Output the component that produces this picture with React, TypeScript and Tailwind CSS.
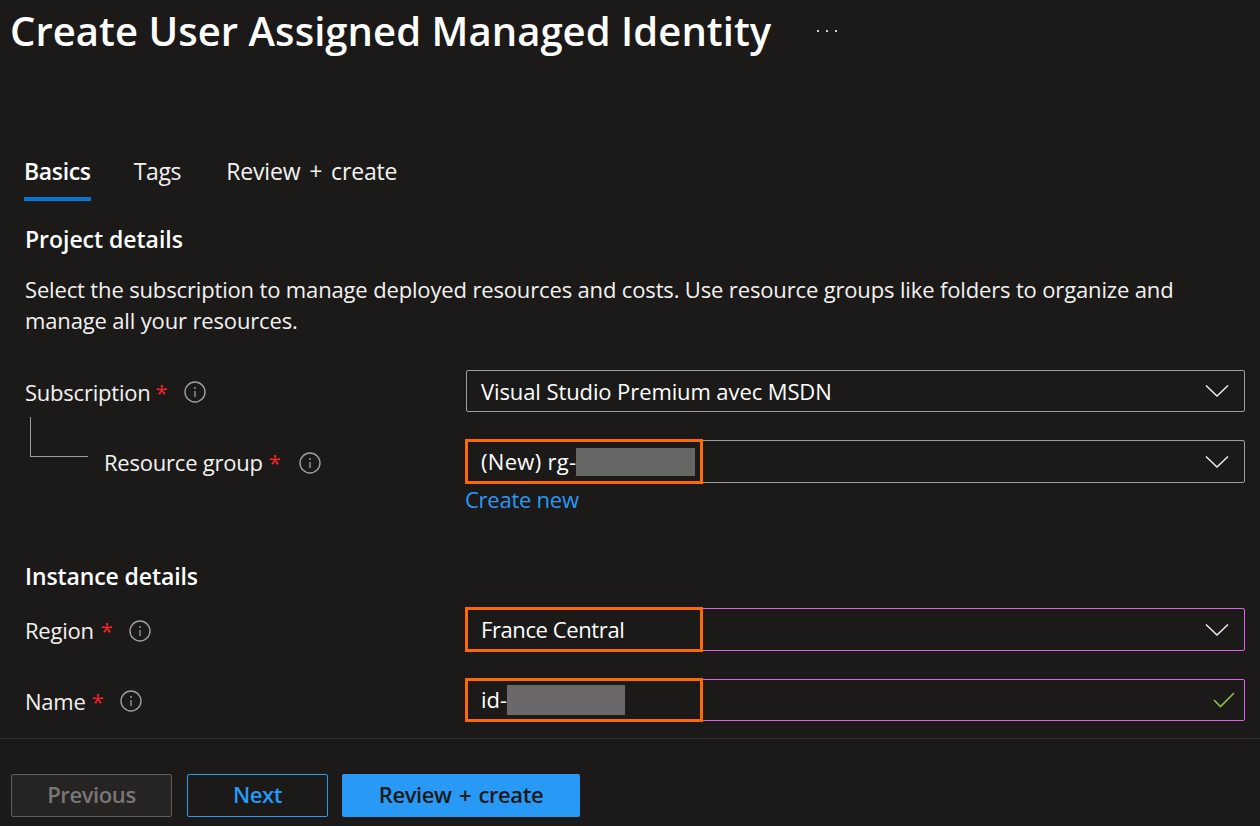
const font = { fontFamily: '"Open Sans", "Noto Sans", sans-serif' };

function InfoIcon() {
  return (
    <svg width="22" height="22" viewBox="0 0 22 22" fill="none" className="shrink-0">
      <circle cx="11" cy="11" r="10" stroke="#a19f9d" strokeWidth="1.4" />
      <line x1="11" y1="10" x2="11" y2="16" stroke="#a19f9d" strokeWidth="1.3" />
      <circle cx="11" cy="7" r="0.9" fill="#a19f9d" />
    </svg>
  );
}

function Chevron() {
  return (
    <svg width="24" height="14" viewBox="0 0 24 14" fill="none" className="shrink-0">
      <polyline points="1,1.5 12,12 23,1.5" stroke="#f3f2f1" strokeWidth="1.4" />
    </svg>
  );
}

function Check() {
  return (
    <svg width="22" height="16" viewBox="0 0 22 16" fill="none" className="-mr-[6px] shrink-0">
      <polyline points="1,8 7.5,14.5 21,1" stroke="#8cbd46" strokeWidth="1.6" />
    </svg>
  );
}

function Label({ text, starGap = 'ml-[6px]', gap = 'ml-[17px]' }: { text: string; starGap?: string; gap?: string }) {
  return (
    <div className="flex items-center pt-[2px] text-[22px] tracking-[-0.22px] text-[#f3f2f1]">
      <span>{text}</span>
      <span className={`${starGap} text-[#f1222f]`}>*</span>
      <span className={gap}>
        <InfoIcon />
      </span>
    </div>
  );
}

function Field({
  children,
  border = 'border-[#a19f9d]',
  icon,
  mark,
  height = 'h-[42px]',
}: {
  children: React.ReactNode;
  border?: string;
  icon: React.ReactNode;
  mark?: boolean;
  height?: string;
}) {
  return (
    <div className={`relative flex ${height} w-[779px] items-center justify-between rounded-[2px] border pl-[14px] pr-[15px] ${border}`}>
      <div className="flex items-center text-[22px] text-white">{children}</div>
      {icon}
      {mark && <div className="absolute -left-[2px] -top-[2px] -bottom-[2px] w-[238px] border-[3px] border-[#ff6a00]" />}
    </div>
  );
}

export default function App() {
  return (
    <div className="flex h-[826px] w-[1260px] flex-col overflow-hidden bg-[#1b1a19] text-white" style={font}>
      <div className="flex h-[62px] items-center pl-[10px]">
        <h1 className="text-[40px] font-semibold tracking-[0.05px] whitespace-nowrap">Create User Assigned Managed Identity</h1>
        <span className="ml-[46px] flex gap-[7px]">
          <i className="h-[2px] w-[2px] bg-[#d2d0ce]" />
          <i className="h-[2px] w-[2px] bg-[#d2d0ce]" />
          <i className="h-[2px] w-[2px] bg-[#d2d0ce]" />
        </span>
      </div>

      <div className="mt-[91px] flex h-[48px] gap-[43px] pl-[24px] text-[23px] tracking-[-0.35px] text-[#f3f2f1]">
        <div className="flex flex-col justify-between">
          <span className="leading-[36px] font-semibold text-white">Basics</span>
          <div className="h-[4px] bg-[#0078d4]" />
        </div>
        <span className="leading-[36px]">Tags</span>
        <span className="ml-[2px] leading-[36px] tracking-[-0.15px] [word-spacing:3px]">Review + create</span>
      </div>

      <div className="flex flex-col pl-[25px] pr-[15px]">
        <h2 className="mt-[22px] text-[23px] leading-[32px] font-semibold tracking-[-0.03px]">Project details</h2>
        <p className="mt-[19px] w-[1190px] text-[22px] leading-[31px] tracking-[-0.15px] text-[#f3f2f1]">
          Select the subscription to manage deployed resources and costs. Use resource groups like folders to organize and manage all your resources.
        </p>

        <div className="mt-[34px] flex items-center justify-between">
          <Label text="Subscription" starGap="ml-[5px]" />
          <Field icon={<Chevron />}>
            <span className="tracking-[-0.1px]">Visual Studio Premium avec MSDN</span>
          </Field>
        </div>

        <div className="mt-[28px] flex h-[43px] justify-between">
          <div className="flex items-center">
            <div className="-mt-[23px] ml-[5px] h-[40px] w-[58px] self-start border-b border-l border-[#a19f9d]" />
            <div className="ml-[16px]">
              <Label text="Resource group" gap="ml-[18px]" />
            </div>
          </div>
          <Field icon={<Chevron />} mark height="h-[43px]">
            <span className="tracking-[0.3px]">(New) rg-</span>
            <span className="h-[28px] w-[119px] bg-[#666665]" />
          </Field>
        </div>

        <a className="ml-[440px] text-[22px] leading-[32px] tracking-[-0.25px] text-[#2899f5]">Create new</a>

        <h2 className="mt-[45px] text-[23px] leading-[32px] font-semibold tracking-[-0.1px]">Instance details</h2>

        <div className="mt-[16px] flex items-center justify-between">
          <Label text="Region" starGap="ml-[7px]" gap="ml-[16px]" />
          <Field icon={<Chevron />} border="border-[#e060f0]" mark height="h-[43px]">
            <span className="tracking-[-0.4px]">France Central</span>
          </Field>
        </div>

        <div className="mt-[28px] flex items-center justify-between">
          <Label text="Name" gap="ml-[16px]" />
          <Field icon={<Check />} border="border-[#e060f0]" mark>
            <span className="-mt-[2px]">id-</span>
            <span className="h-[30px] w-[118px] bg-[#6b686c]" />
          </Field>
        </div>
      </div>

      <div className="mt-[17px] h-px bg-[#323130]" />

      <div className="mt-[35px] flex gap-[15px] pl-[11px] text-[22px] font-semibold tracking-[-0.4px]">
        <button className="h-[43px] w-[161px] rounded-[2px] border border-[#605e5c] bg-[#252423] pb-[2px] text-[#797775]">Previous</button>
        <button className="h-[43px] w-[141px] rounded-[2px] border border-[#2899f5] pb-[2px] text-[#2899f5]">Next</button>
        <button className="-ml-px h-[43px] w-[238px] rounded-[2px] bg-[#2899f5] pb-[2px] text-[#1b1a19] [word-spacing:2px]">Review + create</button>
      </div>
    </div>
  );
}
